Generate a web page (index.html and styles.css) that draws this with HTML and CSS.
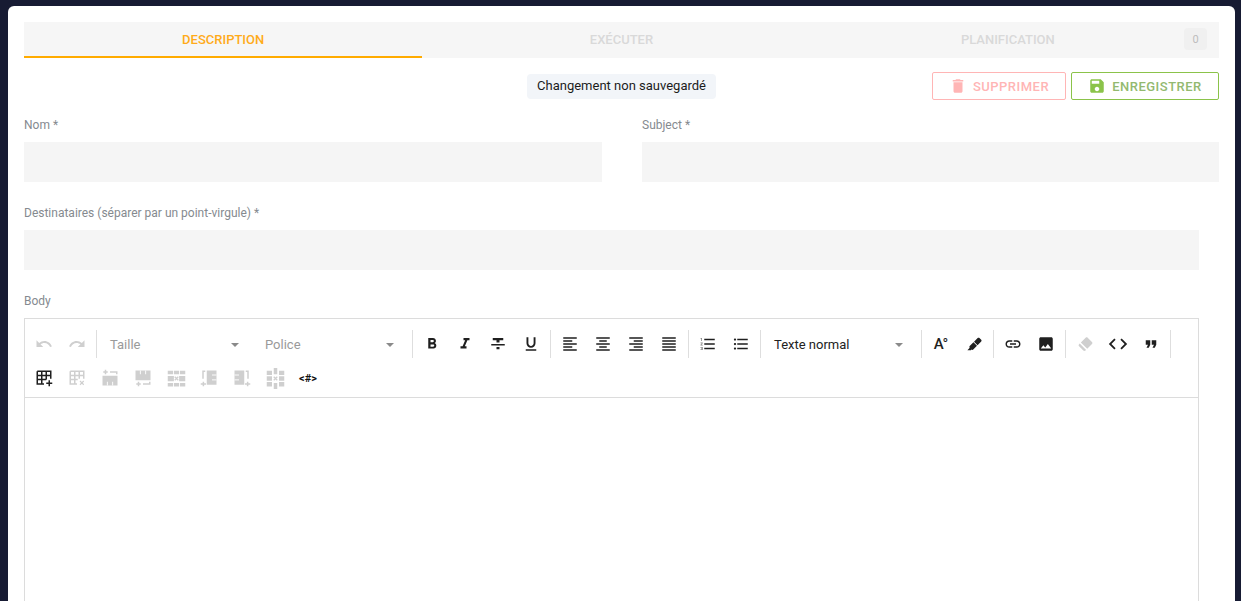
FILE: index.html
```html
<!DOCTYPE html>
<html lang="fr">
<head>
<meta charset="utf-8">
<title>Description</title>
<link rel="stylesheet" href="styles.css">
</head>
<body>
<main class="card">
  <nav class="tabs">
    <div class="tab active">Description</div>
    <div class="tab">Exécuter</div>
    <div class="tab with-badge">Planification<span class="badge">0</span></div>
  </nav>

  <div class="actions">
    <div></div>
    <div class="chip">Changement non sauvegardé</div>
    <div class="buttons">
      <button class="btn danger"><svg viewBox="0 0 24 24"><path d="M6 19c0 1.1.9 2 2 2h8c1.1 0 2-.9 2-2V7H6v12zM19 4h-3.5l-1-1h-5l-1 1H5v2h14V4z"/></svg>Supprimer</button>
      <button class="btn success"><svg viewBox="0 0 24 24"><path d="M17 3H5c-1.11 0-2 .9-2 2v14c0 1.1.89 2 2 2h14c1.1 0 2-.9 2-2V7l-4-4zm-5 16c-1.66 0-3-1.34-3-3s1.34-3 3-3 3 1.34 3 3-1.34 3-3 3zm3-10H5V5h10v4z"/></svg>Enregistrer</button>
    </div>
  </div>

  <div class="two-cols">
    <div class="field"><label class="label">Nom *</label><div class="input"></div></div>
    <div class="field"><label class="label">Subject *</label><div class="input"></div></div>
  </div>
  <div class="field narrow"><label class="label">Destinataires (séparer par un point-virgule) *</label><div class="input"></div></div>
  <div class="field narrow">
    <label class="label">Body</label>
    <div class="editor">
      <div class="toolbar">
        <span class="tool off"><svg viewBox="0 0 24 24"><path d="M12.5 8c-2.65 0-5.05.99-6.9 2.6L2 7v9h9l-3.62-3.62c1.39-1.16 3.16-1.88 5.12-1.88 3.54 0 6.55 2.31 7.6 5.5l2.37-.78C21.08 11.03 17.15 8 12.5 8z"/></svg></span>
        <span class="tool off"><svg viewBox="0 0 24 24"><path d="M18.4 10.6C16.55 8.99 14.15 8 11.5 8c-4.65 0-8.58 3.03-9.96 7.22L3.9 16c1.05-3.19 4.05-5.5 7.6-5.5 1.95 0 3.73.72 5.12 1.88L13 16h9V7l-3.6 3.6z"/></svg></span>
        <span class="sep"></span>
        <span class="select muted">Taille<i class="caret"></i></span>
        <span class="select muted">Police<i class="caret"></i></span>
        <span class="sep"></span>
        <span class="tool"><svg viewBox="0 0 24 24"><path d="M15.6 10.79c.97-.67 1.65-1.77 1.65-2.79 0-2.26-1.75-4-4-4H7v14h7.04c2.09 0 3.71-1.7 3.71-3.79 0-1.52-.86-2.82-2.15-3.42zM10 6.5h3c.83 0 1.5.67 1.5 1.5s-.67 1.5-1.5 1.5h-3v-3zm3.5 9H10v-3h3.5c.83 0 1.5.67 1.5 1.5s-.67 1.5-1.5 1.5z"/></svg></span>
        <span class="tool"><svg viewBox="0 0 24 24"><path d="M10 4v3h2.21l-3.42 8H6v3h8v-3h-2.21l3.42-8H18V4z"/></svg></span>
        <span class="tool"><svg viewBox="0 0 24 24"><path d="M10 19h4v-3h-4v3zM5 4v3h5v3h4V7h5V4H5zM3 14h18v-2H3v2z"/></svg></span>
        <span class="tool"><svg viewBox="0 0 24 24"><path d="M12 17c3.31 0 6-2.69 6-6V3h-2.5v8c0 1.93-1.57 3.5-3.5 3.5S8.5 12.93 8.5 11V3H6v8c0 3.31 2.69 6 6 6zm-7 2v2h14v-2H5z"/></svg></span>
        <span class="sep"></span>
        <span class="tool"><svg viewBox="0 0 24 24"><path d="M15 15H3v2h12v-2zm0-8H3v2h12V7zM3 13h18v-2H3v2zm0 8h18v-2H3v2zM3 3v2h18V3H3z"/></svg></span>
        <span class="tool"><svg viewBox="0 0 24 24"><path d="M7 15v2h10v-2H7zm-4 6h18v-2H3v2zm0-8h18v-2H3v2zm4-6v2h10V7H7zM3 3v2h18V3H3z"/></svg></span>
        <span class="tool"><svg viewBox="0 0 24 24"><path d="M3 21h18v-2H3v2zm6-4h12v-2H9v2zm-6-4h18v-2H3v2zm6-4h12V7H9v2zM3 3v2h18V3H3z"/></svg></span>
        <span class="tool"><svg viewBox="0 0 24 24"><path d="M3 21h18v-2H3v2zm0-4h18v-2H3v2zm0-4h18v-2H3v2zm0-4h18V7H3v2zm0-6v2h18V3H3z"/></svg></span>
        <span class="sep"></span>
        <span class="tool"><svg viewBox="0 0 24 24"><path class="faint" d="M2 17h2v.5H3v1h1v.5H2v1h3v-4H2v1zm1-9h1V4H2v1h1v3zm-1 3h1.8L2 13.1v.9h3v-1H3.2L5 10.9V10H2v1z"/><path d="M7 5v2h14V5H7zm0 14h14v-2H7v2zm0-6h14v-2H7v2z"/></svg></span>
        <span class="tool"><svg viewBox="0 0 24 24"><path d="M4 10.5c-.83 0-1.5.67-1.5 1.5s.67 1.5 1.5 1.5 1.5-.67 1.5-1.5-.67-1.5-1.5-1.5zm0-6c-.83 0-1.5.67-1.5 1.5S3.17 7.5 4 7.5 5.5 6.83 5.5 6 4.83 4.5 4 4.5zm0 12c-.83 0-1.5.68-1.5 1.5s.68 1.5 1.5 1.5 1.5-.68 1.5-1.5-.67-1.5-1.5-1.5zM7 19h14v-2H7v2zm0-6h14v-2H7v2zm0-8v2h14V5H7z"/></svg></span>
        <span class="sep"></span>
        <span class="select">Texte normal<i class="caret"></i></span>
        <span class="sep"></span>
        <span class="tool"><span class="font-color">A<sup>°</sup></span></span>
        <span class="tool"><svg class="small" viewBox="0 0 24 24"><path d="M18.5 1.15c-.53 0-1.04.19-1.43.58l-5.81 5.82 5.65 5.65 5.82-5.81c.77-.78.77-2.04 0-2.83l-2.84-2.83c-.39-.39-.89-.58-1.39-.58zM10.3 8.5l-5.96 5.96c-.78.78-.78 2.04.02 2.85C3.14 18.54 1.9 19.77.67 21h5.66l.86-.86c.78.76 2.03.75 2.81-.02l5.96-5.96L10.3 8.5z"/></svg></span>
        <span class="sep"></span>
        <span class="tool"><svg viewBox="0 0 24 24"><path d="M3.9 12c0-1.71 1.39-3.1 3.1-3.1h4V7H7c-2.76 0-5 2.24-5 5s2.24 5 5 5h4v-1.9H7c-1.71 0-3.1-1.39-3.1-3.1zM8 13h8v-2H8v2zm9-6h-4v1.9h4c1.71 0 3.1 1.39 3.1 3.1s-1.39 3.1-3.1 3.1h-4V17h4c2.76 0 5-2.24 5-5s-2.24-5-5-5z"/></svg></span>
        <span class="tool"><svg viewBox="0 0 24 24"><path d="M21 19V5c0-1.1-.9-2-2-2H5c-1.1 0-2 .9-2 2v14c0 1.1.9 2 2 2h14c1.1 0 2-.9 2-2zM8.500 13.500l2.500 3.010L14.500 12l4.500 6H5l3.500-4.500z"/></svg></span>
        <span class="sep"></span>
        <span class="tool off"><svg viewBox="0 0 24 24"><path d="M12.8 3.600c.8-.8 2-.8 2.800 0l5.700 5.700c.8.8.8 2 0 2.800l-6.300 6.300-8.500-8.500zM5 11.400l8.500 8.500-.9.900c-.8.8-2 .8-2.800 0l-5.700-5.700c-.8-.8-.8-2 0-2.800z"/></svg></span>
        <span class="tool"><svg class="large" viewBox="0 0 24 24"><path d="M9.400 16.600L4.800 12l4.600-4.600L8 6l-6 6 6 6 1.400-1.400zm5.200 0l4.600-4.600-4.600-4.600L16 6l6 6-6 6-1.400-1.400z"/></svg></span>
        <span class="tool"><svg viewBox="0 0 24 24"><path d="M6 17h3l2-4V7H5v6h3zm8 0h3l2-4V7h-6v6h3z"/></svg></span>
        <span class="sep"></span>

        <span class="tool"><svg class="lines" viewBox="0 0 24 24"><path d="M3 3h18v10M3 3v17h9M3 8.500h18M3 14h12M9 3v17M15 3v11M19 15v8M15 19h8"/></svg></span>
        <span class="tool off"><svg class="lines" viewBox="0 0 24 24"><path d="M3 3h18v10M3 3v17h9M3 8.500h18M3 14h10M9 3v17M15 3v10"/><path class="thin" d="M16 16l5 5M21 16l-5 5"/></svg></span>
        <span class="tool off"><svg class="lines" viewBox="0 0 24 24"><path d="M6 1v6M3 4h6M12 4h9v3"/><path class="solid" d="M2 9h20v13H2z"/><path class="cut" d="M8.500 17v5M15.500 17v5"/></svg></span>
        <span class="tool off"><svg class="lines" viewBox="0 0 24 24"><path class="solid" d="M2 2h20v13H2z"/><path class="cut" d="M8.500 2v5M15.500 2v5"/><path d="M6 17v6M3 20h6M12 20h9v-3"/></svg></span>
        <span class="tool off"><svg class="wide lines" viewBox="0 0 24 24"><path class="solid" d="M2 3h6v4H2zM9 3h6v4H9zM16 3h6v4h-6zM2 9h7v6H2zM15 9h7v6h-7zM2 17h6v4H2zM9 17h6v4H9zM16 17h6v4h-6z"/><path class="thin" d="M10 10l4 4M14 10l-4 4"/></svg></span>
        <span class="tool off"><svg class="lines" viewBox="0 0 24 24"><path d="M1 20h7M4.500 17v6M7 3H4v10"/><path class="solid" d="M9 2h13v19H9z"/><path class="cut" d="M16 8h6M16 14.500h6"/></svg></span>
        <span class="tool off"><svg class="lines" viewBox="0 0 24 24"><path class="solid" d="M2 2h13v19H2z"/><path class="cut" d="M2 8h6M2 14.500h6"/><path d="M17 3h3v10M16 20h7M19.500 17v6"/></svg></span>
        <span class="tool off"><svg class="wide lines" viewBox="0 0 24 24"><path class="solid" d="M2 3h6v5H2zM2 9.500h6v5H2zM2 16h6v5H2zM16 3h6v5h-6zM16 9.500h6v5h-6zM16 16h6v5h-6zM10 0h4v7h-4zM10 17h4v7h-4z"/><path class="thin" d="M10 10l4 4M14 10l-4 4"/></svg></span>
        <span class="tool"><span class="var">&lt;#&gt;</span></span>
      </div>
      <div class="content"></div>
    </div>
  </div>
</main>
</body>
</html>
```
FILE: styles.css
```css
* { box-sizing: border-box; }
html, body { height: 100%; }
body {
  margin: 0;
  overflow: hidden;
  background: #171b33;
  font-family: Roboto, "Liberation Sans", sans-serif;
}
.card {
  margin: 6px 6px 0 8px;
  padding: 16px;
  height: 700px;
  background: #fff;
  border-radius: 6px;
}
.tabs {
  display: grid;
  grid-template-columns: repeat(3, 1fr);
  height: 36px;
  background: #f6f6f6;
}
.tab {
  position: relative;
  display: flex;
  align-items: center;
  justify-content: center;
  padding-bottom: 2px;
  font-size: 13px;
  font-weight: 500;
  text-transform: uppercase;
  color: #d9d9d9;
}
.tab.active {
  color: #ffab1a;
  box-shadow: inset 0 -2px 0 #ffab00;
}
.with-badge { padding-right: 24px; }
.badge {
  position: absolute;
  right: 12px;
  top: 6px;
  width: 23px;
  height: 22px;
  display: flex;
  align-items: center;
  justify-content: center;
  border-radius: 4px;
  background: #f0f0f0;
  font-size: 11px;
  font-weight: 400;
  color: #bdbdbd;
}
.actions {
  display: grid;
  grid-template-columns: 1fr auto 1fr;
  margin-top: 14px;
  height: 28px;
}
.chip {
  align-self: start;
  margin-top: 2px;
  height: 25px;
  padding: 0 10px 2px;
  display: flex;
  align-items: center;
  border-radius: 4px;
  background: #f2f5f9;
  font-size: 13px;
  color: #1c1c1c;
}
.buttons {
  display: flex;
  justify-content: flex-end;
  gap: 5px;
}
.btn {
  display: flex;
  align-items: center;
  justify-content: center;
  gap: 6px;
  height: 28px;
  border-radius: 2px;
  background: #fff;
  font: 500 13px Roboto, sans-serif;
  letter-spacing: .5px;
  text-transform: uppercase;
  padding: 0;
}
.btn svg { width: 18px; height: 18px; fill: currentColor; }
.danger { width: 134px; border: 1px solid #ffb5b5; color: #ffb5b5; }
.success { width: 148px; border: 1px solid #8bc34a; color: #93b96f; }
.success svg { color: #8bc34a; }
.two-cols {
  display: grid;
  grid-template-columns: 578px 577px;
  gap: 40px;
  margin-top: 16px;
}
.field { display: flex; flex-direction: column; }
.narrow { width: 1175px; margin-top: 22px; }
.label {
  height: 18px;
  line-height: 18px;
  margin-bottom: 8px;
  font-size: 12px;
  color: #858a8f;
}
.input { height: 40px; background: #f5f5f5; }
.editor { border: 1px solid #dcdcdc; }
.toolbar {
  display: flex;
  flex-wrap: wrap;
  align-items: center;
  padding: 8px 2.5px 2px;
  border-bottom: 1px solid #dcdcdc;
}
.tool {
  width: 33px;
  height: 34px;
  display: flex;
  align-items: center;
  justify-content: center;
  color: #1f1f1f;
}
.tool svg { width: 18px; height: 18px; fill: currentColor; }
.tool svg.small { width: 15px; height: 15px; }
.tool svg.large { width: 22px; height: 22px; }
.tool svg.wide { width: 21px; height: 21px; }
.tool.off { color: #cfcfcf; }
.tool svg.lines { fill: none; stroke: currentColor; stroke-width: 2; }
.lines .solid { fill: currentColor; stroke: none; }
.lines .thin { stroke-width: 1.5; }
.lines .cut { stroke: #fff; stroke-width: 1.2; }
.faint { opacity: .55; }
.sep {
  width: 1px;
  height: 28px;
  margin: 0 2.5px;
  background: #dedede;
}
.select {
  position: relative;
  width: 155px;
  height: 34px;
  padding-left: 10.5px;
  display: flex;
  align-items: center;
  font-size: 13px;
  color: #222;
}
.select.muted { color: #9a9a9a; }
.caret {
  position: absolute;
  right: 15.5px;
  top: 16px;
  border-left: 4px solid transparent;
  border-right: 4px solid transparent;
  border-top: 4px solid #8a8a8a;
}
.font-color {
  font-size: 15px;
  font-weight: 500;
  color: #1f1f1f;
  line-height: 1;
}
.font-color sup { font-size: 15px; line-height: 0; vertical-align: 0; margin-left: -1px; }
.var { font-size: 11px; font-weight: 700; color: #111; }
.content { height: 300px; }
```
